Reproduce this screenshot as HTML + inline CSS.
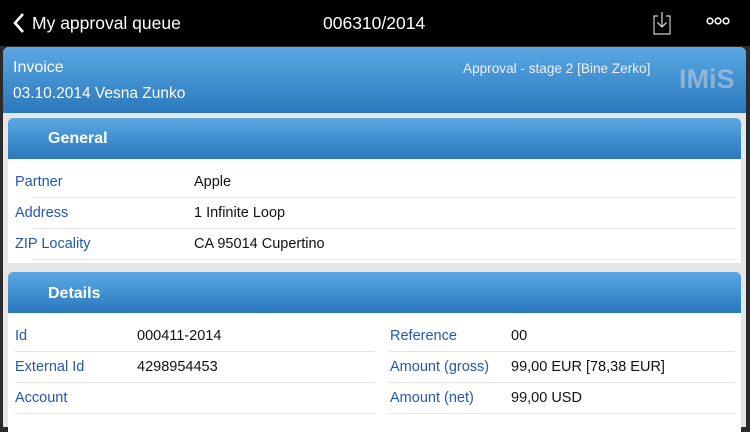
<!DOCTYPE html>
<html><head><meta charset="utf-8"><style>
*{margin:0;padding:0;box-sizing:border-box}
body{width:750px;height:422px;overflow:hidden;background:#2a2a2a;font-family:"Liberation Sans",sans-serif;position:relative}
.a{position:absolute;white-space:nowrap}
.top{left:0;top:0;width:750px;height:46px;background:#000}
.bg{left:3px;top:47px;width:743px;height:380px;background:#e6e6e6;border-radius:6px 6px 0 0}
.blue{background:linear-gradient(#5ba8e4,#2a78bc)}
.hdr{left:3px;top:47px;width:743px;height:66px;border-radius:6px 6px 0 0}
.card{background:#fff;border-radius:5px 5px 0 0}
.sec{height:41px;border-radius:5px 5px 0 0;color:#fff;font-size:16px;font-weight:bold;padding:12px 0 0 40px}
.l{color:#2456b8;font-size:14.5px}
.v{color:#111;font-size:14.5px}
.sep{height:1px;background:#e3e3e3}
</style></head><body>
<div class="a top"></div>
<svg class="a" style="left:12px;top:12px" width="14" height="22"><path d="M11 2 L3 11 L11 20" stroke="#fff" stroke-width="2.6" fill="none"/></svg>
<div class="a" style="left:32px;top:13px;color:#fff;font-size:17.5px">My approval queue</div>
<div class="a" style="left:323px;top:13px;color:#fff;font-size:17.5px">006310/2014</div>
<svg class="a" style="left:651px;top:10px" width="22" height="26"><path d="M7 6 H3 V24 H19 V6 H15" stroke="#ccc" stroke-width="1.2" fill="none"/><path d="M11 2 V17 M6.5 12.5 L11 17 L15.5 12.5" stroke="#ccc" stroke-width="1.3" fill="none"/></svg>
<svg class="a" style="left:706px;top:16px" width="24" height="10"><circle cx="4" cy="5" r="2.8" stroke="#fff" stroke-width="1.6" fill="none"/><circle cx="12" cy="5" r="2.8" stroke="#fff" stroke-width="1.6" fill="none"/><circle cx="20" cy="5" r="2.8" stroke="#fff" stroke-width="1.6" fill="none"/></svg>
<div class="a bg"></div>
<div class="a hdr blue"></div>
<div class="a" style="left:13px;top:59px;color:#fff;font-size:16px">Invoice</div>
<div class="a" style="left:13px;top:85px;color:#fff;font-size:15.5px">03.10.2014 Vesna Zunko</div>
<div class="a" style="left:463px;top:61px;color:#eef;font-size:13.6px">Approval - stage 2 [Bine Zerko]</div>
<div class="a" style="left:679px;top:64px;color:rgba(190,205,220,0.6);font-size:27px;font-weight:bold">IMiS</div>

<div class="a card" style="left:8px;top:118px;width:733px;height:145px"></div>
<div class="a sec blue" style="left:8px;top:118px;width:733px">General</div>
<div class="a l" style="left:15px;top:174px">Partner</div><div class="a v" style="left:194px;top:174px">Apple</div>
<div class="a sep" style="left:33px;top:197px;width:702px"></div>
<div class="a l" style="left:15px;top:205px">Address</div><div class="a v" style="left:194px;top:205px">1 Infinite Loop</div>
<div class="a sep" style="left:33px;top:228px;width:702px"></div>
<div class="a l" style="left:15px;top:236px">ZIP Locality</div><div class="a v" style="left:194px;top:236px">CA 95014 Cupertino</div>
<div class="a sep" style="left:33px;top:259px;width:702px"></div>

<div class="a card" style="left:8px;top:272px;width:733px;height:160px"></div>
<div class="a sec blue" style="left:8px;top:272px;width:733px;padding-top:13px">Details</div>
<div class="a l" style="left:15px;top:328px">Id</div><div class="a v" style="left:137px;top:328px">000411-2014</div>
<div class="a sep" style="left:15px;top:351px;width:360px"></div>
<div class="a l" style="left:15px;top:359px">External Id</div><div class="a v" style="left:137px;top:359px">4298954453</div>
<div class="a sep" style="left:15px;top:382px;width:360px"></div>
<div class="a l" style="left:15px;top:390px">Account</div>
<div class="a sep" style="left:15px;top:413px;width:360px"></div>
<div class="a l" style="left:390px;top:328px">Reference</div><div class="a v" style="left:511px;top:328px">00</div>
<div class="a sep" style="left:389px;top:351px;width:346px"></div>
<div class="a l" style="left:390px;top:359px">Amount (gross)</div><div class="a v" style="left:511px;top:359px">99,00 EUR [78,38 EUR]</div>
<div class="a sep" style="left:389px;top:382px;width:346px"></div>
<div class="a l" style="left:390px;top:390px">Amount (net)</div><div class="a v" style="left:511px;top:390px">99,00 USD</div>
<div class="a sep" style="left:389px;top:413px;width:346px"></div>
</body></html>
